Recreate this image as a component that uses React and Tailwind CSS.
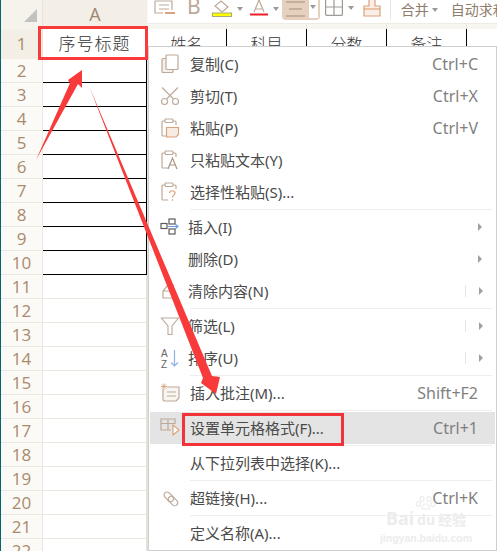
const cjk = "font-['Noto_Sans','Noto_Sans_CJK_SC',sans-serif]";

const Tan = "#bda999";
const Orange = "#dca27a";

const CopyIcon = () => (
  <svg width="20" height="20" viewBox="0 0 20 20" fill="none" stroke={Tan} strokeWidth="1.2">
    <rect x="2" y="4.5" width="11" height="14" rx="1" fill="#f4efea" />
    <rect x="6" y="1" width="12" height="14.5" rx="1" fill="#fff" />
  </svg>
);

const CutIcon = () => (
  <svg width="20" height="20" viewBox="0 0 20 20" fill="none" stroke={Tan} strokeWidth="1.1">
    <path d="M2 1.5 13.5 13M18 1.5 6.5 13" />
    <circle cx="4.5" cy="15.5" r="3" />
    <circle cx="15.5" cy="15.5" r="3" />
  </svg>
);

const Clip = ({ children }) => (
  <svg width="20" height="20" viewBox="0 0 20 20" fill="none" stroke={Tan} strokeWidth="1.2">
    <path d="M5 3H3a1 1 0 0 0-1 1v13a1 1 0 0 0 1 1h5M13 3h2a1 1 0 0 1 1 1v3" />
    <rect x="5" y="1" width="8" height="3.5" rx="1" />
    {children}
  </svg>
);

const PasteIcon = () => (
  <Clip>
    <path d="M6.5 9.5h12v7l-2.5 2.5H6.5z" fill="#f6ece4" stroke={Orange} />
  </Clip>
);

const TextIcon = () => (
  <Clip>
    <path d="M8 19 12.5 8 17 19M9.8 15h5.4" stroke="#a89484" />
  </Clip>
);

const PickIcon = () => (
  <Clip>
    <path d="M9.5 11c.3-3 5.5-3 5.5 0 0 2.2-2.5 2-2.5 4.5" stroke={Orange} />
    <path d="M12.5 17.2v1.6" stroke={Orange} />
  </Clip>
);

const InsertIcon = () => (
  <svg width="20" height="20" viewBox="0 0 20 20" fill="none" stroke="#5c5c5c" strokeWidth="1.2">
    <rect x="1" y="6.5" width="6" height="5" />
    <rect x="9" y="2" width="6" height="5" />
    <rect x="9" y="12" width="6" height="5" />
    <path d="M8 9.5h10M15 7l3 2.5-3 2.5" stroke="#6f9de0" />
  </svg>
);

const ClearIcon = () => (
  <svg width="20" height="20" viewBox="0 0 20 20" fill="none" stroke={Tan} strokeWidth="1.2">
    <path d="M3 17V10l5-6h5v13zM3 10h10" />
  </svg>
);

const FilterIcon = () => (
  <svg width="20" height="20" viewBox="0 0 20 20" fill="none" stroke={Tan} strokeWidth="1.1">
    <path d="M1.5 2h17l-6.5 8v8.5H8V10z" />
  </svg>
);

const SortIcon = () => (
  <svg width="20" height="20" viewBox="0 0 20 20" fill="none">
    <text x="1" y="9" fontSize="10" fill="#666" fontFamily="Liberation Sans">A</text>
    <text x="1" y="19.5" fontSize="10" fill="#666" fontFamily="Liberation Sans">Z</text>
    <path d="M14.5 2v16M11 14.5l3.5 3.5 3.5-3.5" stroke="#8db1e6" strokeWidth="1.2" />
  </svg>
);

const NoteIcon = () => (
  <svg width="20" height="20" viewBox="0 0 20 20" fill="none" stroke={Tan} strokeWidth="1.2">
    <path d="M3 6v11l1 1h12l3-3V4H7" fill="#f9f6f2" />
    <path d="M7 9h9M7 13h9" />
    <path d="M1 3.5h6M4 .5v6M2 1.5l4 4M6 1.5l-4 4" stroke={Orange} strokeWidth="0.9" />
  </svg>
);

const FormatIcon = () => (
  <svg width="20" height="20" viewBox="0 0 20 20" fill="none" stroke={Tan} strokeWidth="1.2">
    <path d="M11 14H1V3h14v5M1 7.5h14M8 3v11" />
    <path d="M13 9v10l6-5z" stroke={Orange} fill="#fff" />
  </svg>
);

const LinkIcon = () => (
  <svg width="20" height="20" viewBox="0 0 20 20" fill="none" stroke={Tan} strokeWidth="1.2">
    <rect x="-1.5" y="-3" width="11" height="6" rx="3" transform="translate(6 6) rotate(45)" />
    <rect x="-5.5" y="-3" width="11" height="6" rx="3" transform="translate(13 13) rotate(45)" />
  </svg>
);

const items = [
  { label: "复制(C)", icon: <CopyIcon />, keys: "Ctrl+C" },
  { label: "剪切(T)", icon: <CutIcon />, keys: "Ctrl+X" },
  { label: "粘贴(P)", icon: <PasteIcon />, keys: "Ctrl+V" },
  { label: "只粘贴文本(Y)", icon: <TextIcon /> },
  { label: "选择性粘贴(S)...", icon: <PickIcon />, sep: true },
  { label: "插入(I)", icon: <InsertIcon />, tight: true, more: true },
  { label: "删除(D)", tight: true, more: true },
  { label: "清除内容(N)", icon: <ClearIcon />, tight: true, more: true, split: true, sep: true },
  { label: "筛选(L)", icon: <FilterIcon />, tight: true, more: true, split: true },
  { label: "排序(U)", icon: <SortIcon />, tight: true, more: true, split: true, sep: true },
  { label: "插入批注(M)...", icon: <NoteIcon />, keys: "Shift+F2", sep: true },
  { label: "设置单元格格式(F)...", icon: <FormatIcon />, keys: "Ctrl+1", active: true, sep: true },
  { label: "从下拉列表中选择(K)...", sep: true },
  { label: "超链接(H)...", icon: <LinkIcon />, keys: "Ctrl+K", sep: true },
  { label: "定义名称(A)..." },
];

const MenuItem = ({ item }) => (
  <>
    <div className={`flex h-8 items-center pr-[17px] ${item.active ? "bg-[#e4e4e4]" : ""}`}>
      <div className={`flex shrink-0 pl-[10px] ${item.tight ? "w-[38px]" : "w-[40px]"} ${item.active ? "-mt-[5px]" : ""}`}>{item.icon}</div>
      <span className="text-[15px] text-[#4a4a4a]">{item.label}</span>
      {item.keys && <span className="ml-auto text-[16px] text-[#7f7f7f]">{item.keys}</span>}
      {item.more && (
        <div className="ml-auto flex items-center">
          {item.split && <div className="mr-[13px] h-3 w-px bg-[#e6e6e6]" />}
          <div className="mr-[-5px] h-0 w-0 border-y-[4px] border-l-[4px] border-y-transparent border-l-[#a0a0a0]" />
        </div>
      )}
    </div>
    {item.sep && (
      <div className="flex h-[3px] items-center pl-[40px] pr-[3px]">
        <div className="h-px w-full bg-[#eeeeee]" />
      </div>
    )}
  </>
);

const Caret = () => (
  <div className="h-0 w-0 border-x-[3px] border-t-[4px] border-x-transparent border-t-[#9a9a9a]" />
);

const Toolbar = () => (
  <div className={`absolute left-[148px] top-0 flex h-[24px] w-[349px] items-start overflow-hidden border-b border-[#eeeae4] bg-white *:shrink-0 ${cjk}`}>
    <svg className="ml-[6px] mt-[-3px]" width="22" height="20" viewBox="0 0 22 20" fill="none" stroke={Tan} strokeWidth="1.2">
      <path d="M1 4h17v9M1 4v12h8M5 8h10M5 12h10" />
      <path d="M11 16h10" stroke={Orange} strokeWidth="2" />
    </svg>
    <span className="ml-[11px] mt-[-6px] text-[21px] leading-[24px] text-[#bda999]">B</span>
    <div className="ml-[11px] flex items-center">
      <svg width="20" height="17" viewBox="0 0 20 17" fill="none">
        <path d="M3 6 9 1l7 6-6 5z" stroke={Tan} strokeWidth="1.2" />
        <rect x="0.5" y="13" width="19" height="3.5" fill="#ffff00" stroke="#a8a878" />
      </svg>
      <div className="ml-[5px]"><Caret /></div>
    </div>
    <div className="ml-[7px] flex items-center">
      <svg width="18" height="17" viewBox="0 0 18 17" fill="none">
        <path d="M4 12 9 0l5 12M5.5 9h7" stroke={Tan} strokeWidth="1.2" />
        <rect x="0" y="13.5" width="18" height="2" fill="#ee1c25" />
      </svg>
      <div className="ml-[5px]"><Caret /></div>
    </div>
    <div className="ml-[3px] flex h-[20px] w-[38px] overflow-hidden rounded-b-[4px] bg-[#e5cfbd]">
      <div className="flex w-[27px] flex-col items-center gap-[5px] pt-[1px]">
        <div className="h-[2px] w-[19px] bg-[#c4ae9c]" />
        <div className="h-[2px] w-[13px] bg-[#c4ae9c]" />
        <div className="h-[2px] w-[19px] bg-[#c4ae9c]" />
      </div>
      <div className="flex flex-1 justify-center bg-white pt-[5px] mr-[2px] mb-[2px]"><Caret /></div>
    </div>
    <div className="ml-[5px] flex items-center">
      <svg width="18" height="16" viewBox="0 0 18 16" fill="none" stroke="#a09a94" strokeWidth="1.2">
        <rect x="0.6" y="-2" width="16.8" height="17.4" rx="1" />
        <path d="M9 -2v17M0 7h18" />
      </svg>
      <div className="ml-[5px]"><Caret /></div>
    </div>
    <svg className="ml-[9px]" width="18" height="17" viewBox="0 0 18 17" fill="none" stroke={Orange} strokeWidth="1.2">
      <path d="M6 0v6H1v10h16V6h-5V0" fill="#f9efe8" />
      <path d="M1 9h16" />
    </svg>
    <div className="ml-[9px] h-[20px] w-px bg-[#ebe7e2]" />
    <span className="ml-[10px] whitespace-nowrap text-[14px] leading-[20px] text-[#8f7c6b]">合并</span>
    <div className="ml-[3px] mt-[8px]"><Caret /></div>
    <span className="ml-[13px] whitespace-nowrap text-[14px] leading-[20px] text-[#8f7c6b]">自动求和</span>
  </div>
);

const rows = Array.from({ length: 21 }, (_, i) => i + 2);

const Sheet = () => (
  <div className="flex h-[551px] w-[497px] bg-white">
    <div className="w-px shrink-0 bg-[#006a6a]" />
    <div className="flex-1">
      <div className="flex h-[29px] bg-[#f8f6f1]">
        <div className="relative w-[42px] border-r border-[#e8e3db] bg-[#f6f3ed]">
          <div className="absolute left-[23px] top-[9px] h-0 w-0 border-b-[13px] border-l-[13px] border-b-[#c2c2c2] border-l-transparent" />
        </div>
        <div className="flex w-[104px] items-center justify-center bg-[#f3efe7] text-[18px] text-[#998673] font-['Open_Sans',sans-serif]">A</div>
        <div className="w-[80px] border-r border-[#e8e3db]" />
        <div className="w-[80px] border-r border-[#e8e3db]" />
        <div className="w-[80px] border-r border-[#e8e3db]" />
        <div className="w-[80px] border-r border-[#e8e3db]" />
      </div>
      <div className="flex h-[30px]">
        <div className="flex w-[42px] items-center justify-center border-r border-[#e8e3db] bg-[#f3efe7] text-[17px] text-[#a88a6c] font-['Open_Sans',sans-serif]">1</div>
        <div className={`flex w-[104px] items-center justify-center border-r border-black text-[17px] font-light tracking-[1px] text-[#333] ${cjk}`}>序号标题</div>
        {["姓名", "科目", "分数", "备注"].map((t) => (
          <div key={t} className={`flex w-[80px] items-center justify-center border-r border-black text-[16px] font-light text-[#333] ${cjk}`}>{t}</div>
        ))}
      </div>
      {rows.map((n) => (
        <div key={n} className="flex h-6">
          <div className="flex w-[42px] items-center justify-center border-b border-r border-[#ece7df] bg-[#fcfaf7] text-[17px] text-[#a88a6c] font-['Open_Sans',sans-serif]">{n}</div>
          <div className={`w-[104px] border-b border-r ${n <= 10 ? "border-black" : "border-b-[#ece7df] border-r-[#e6e1da]"}`} />
        </div>
      ))}
    </div>
  </div>
);

const Arrows = () => (
  <svg className="absolute left-0 top-0" width="497" height="551" viewBox="0 0 497 551">
    <polygon points="36,160 70,83 68,80 82,70 82,88 78,84" fill="#f93a3a" />
    <polygon points="89,86 212,376 220,377 216,394 201,383 203,378" fill="#f93a3a" />
  </svg>
);

const Watermark = () => (
  <div className="pointer-events-none absolute left-[380px] top-[496px] flex w-[92px] flex-col items-center font-['Liberation_Sans',sans-serif] text-[#ececec]">
    <svg width="20" height="14" viewBox="0 0 20 14" fill="none" stroke="#ececec" strokeWidth="1.2">
      <ellipse cx="6" cy="3" rx="2" ry="2.5" />
      <ellipse cx="13" cy="3" rx="2" ry="2.5" />
      <ellipse cx="2.5" cy="8" rx="2" ry="2.5" />
      <ellipse cx="17" cy="8" rx="2" ry="2.5" />
      <path d="M6 13c0-4 2-5 3.5-5s4 1 4 5z" />
    </svg>
    <div className={`-mt-[3px] flex items-baseline gap-[3px] text-[18px] font-bold leading-[22px] ${cjk}`}>
      <span>Bai</span><span className="text-[14px]">du</span><span className="text-[14px]">经验</span>
    </div>
    <div className="text-[10.5px] font-bold leading-[14px]">jingyan.baidu.com</div>
  </div>
);

export default function App() {
  return (
    <div className="relative h-[551px] w-[497px] overflow-hidden bg-white">
      <Sheet />
      <Toolbar />
      <div className={`absolute left-[148px] top-[46px] h-[505px] w-[349px] border border-[#cfcfcf] bg-white px-px pt-px shadow-[-1px_0_0_#e4dfd9] ${cjk}`}>
        {items.map((item) => (
          <MenuItem key={item.label} item={item} />
        ))}
      </div>
      <Watermark />
      <div className="absolute left-[38px] top-[26px] h-[34px] w-[110px] border-[3px] border-[#f93a3a]" />
      <div className="absolute left-[182px] top-[413px] h-[33px] w-[162px] border-[3px] border-[#f2333a]" />
      <Arrows />
    </div>
  );
}
